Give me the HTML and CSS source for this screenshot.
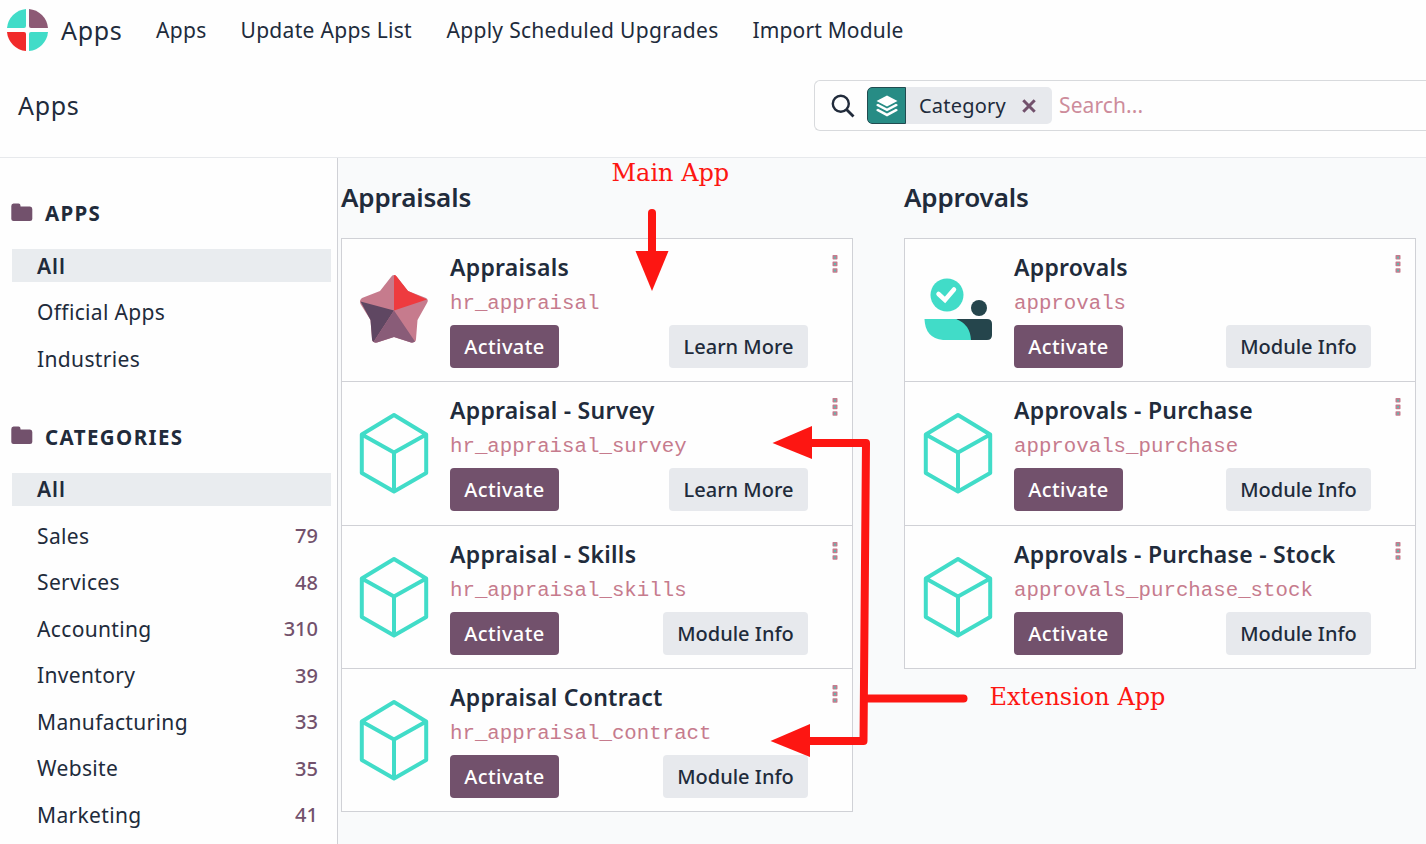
FILE: index.html
```
<!DOCTYPE html>
<html lang="en">
<head>
<meta charset="utf-8">
<title>Apps</title>
<link rel="stylesheet" href="styles.css">
</head>
<body>
<svg width="0" height="0" class="defs">
  <symbol id="cube" viewBox="0 0 70 82"><path d="M35 3 67.2 22.5V61L35 79.5 2.8 61V22.5ZM2.8 22.5 35 40.5 67.2 22.5M35 40.5V79.5" fill="none" stroke="#41dcc8" stroke-width="4" stroke-linejoin="round"/></symbol>
  <symbol id="folder" viewBox="0 0 22 19"><path d="M2.5 0.5H7.5Q9.5 .5 9.5 2.8V3.5H19Q21.3 3.5 21.3 6V16Q21.3 18 19 18H2.5Q.3 18 .3 16V3Q.3 .5 2.5 .5Z" fill="#72516c"/></symbol>
  <symbol id="dots" viewBox="0 0 6 18"><g fill="#c67b8d"><rect x=".5" width="5" height="4.6" rx=".8"/><rect x=".5" y="6.6" width="5" height="4.6" rx=".8"/><rect x=".5" y="13.2" width="5" height="4.6" rx=".8"/></g><g fill="#64b5ad"><rect x="2" y="1.5" width="2" height="2"/><rect x="2" y="8" width="2" height="2"/><rect x="2" y="14.5" width="2" height="2"/></g></symbol>
</svg>
<header class="navbar">
  <svg class="logo" viewBox="0 0 42 42"><path d="M0 19A21 21 0 0 1 19 0V17Q19 19 17 19Z" fill="#41dcc8"/><path d="M22 0A21 21 0 0 1 41 19H24Q22 19 22 17Z" fill="#8d5a75"/><path d="M0 23H17Q19 23 19 25V42A21 21 0 0 1 0 23Z" fill="#f12b2b"/><path d="M41 23A21 21 0 0 1 22 42V25Q22 23 24 23Z" fill="#41dcc8"/></svg>
  <span class="brand">Apps</span>
  <nav class="menu"><a>Apps</a><a class="m2">Update Apps List</a><a class="m3">Apply Scheduled Upgrades</a><a class="m4">Import Module</a></nav>
</header>
<section class="control">
  <span class="crumb">Apps</span>
  <div class="search">
    <svg class="lens" viewBox="0 0 24 24"><circle cx="9.8" cy="9.8" r="8" fill="none" stroke="#212b3b" stroke-width="2.4"/><path d="M15.5 15.5 22.5 22.5" stroke="#212b3b" stroke-width="2.8"/></svg>
    <div class="facet">
      <span class="facet-icon"><svg width="22" height="22" viewBox="0 0 22 22" fill="#fff"><path d="M11 .5 21.5 6 11 11.5.5 6Z"/><path d="M.5 9.5 2 8.7 11 13.4 20 8.7 21.5 9.5V10.7L11 16.2.5 10.7Z"/><path d="M.5 14.5 2 13.700 11 18.400 20 13.700 21.5 14.5V15.7L11 21.5.5 15.7Z"/></svg></span>
      <span class="facet-label">Category</span>
      <svg class="close" viewBox="0 0 13 13"><path d="M1.2 1.2 11.8 11.8M11.8 1.2 1.2 11.8" stroke="#72516c" stroke-width="2.8"/></svg>
    </div>
    <span class="placeholder">Search...</span>
  </div>
</section>
<div class="body">
  <aside class="sidebar">
    <h3><svg><use href="#folder"/></svg>APPS</h3>
    <ul>
      <li class="active"><span>All</span></li>
      <li><span>Official Apps</span></li>
      <li><span>Industries</span></li>
    </ul>
    <h3 class="second"><svg><use href="#folder"/></svg>CATEGORIES</h3>
    <ul>
      <li class="active"><span>All</span></li>
      <li><span>Sales</span><b>79</b></li>
      <li><span>Services</span><b>48</b></li>
      <li><span>Accounting</span><b>310</b></li>
      <li><span>Inventory</span><b>39</b></li>
      <li><span>Manufacturing</span><b>33</b></li>
      <li><span>Website</span><b>35</b></li>
      <li><span>Marketing</span><b>41</b></li>
    </ul>
  </aside>
  <main class="content">
    <section class="group">
      <h2>Appraisals</h2>
      <article class="card">
        <svg class="icon" viewBox="0 0 70 82"><path d="M35 6Q37 6 38 8L49 22 67 29Q70 31 68 34L58.500 51 57 70Q57 74 52 73.500L35 68 18 73.500Q13 74 13 70L11.500 51 1.500 35Q0 31 3 29L21 22 32 8Q33 6 35 6Z" fill="#c67b8d"/><path d="M35 6Q37 6 38 8L49 22 68 30.500 35 41.500Z" fill="#ee3b3f"/><path d="M35 41.500 1.500 32.500 11.500 51 13 70Q13 72 14.500 73Z" fill="#5f4762"/><path d="M35 41.500 14.500 73Q16 74 18 73.500L35 68 52 73.500Q54 74 56 72.500Z" fill="#895c78"/></svg>
        <div class="info"><h4>Appraisals</h4><code>hr_appraisal</code><div class="actions"><button class="primary">Activate</button><button>Learn More</button></div></div>
        <svg class="kebab"><use href="#dots"/></svg>
      </article>
      <article class="card">
        <svg class="icon"><use href="#cube"/></svg>
        <div class="info"><h4>Appraisal - Survey</h4><code>hr_appraisal_survey</code><div class="actions"><button class="primary">Activate</button><button>Learn More</button></div></div>
        <svg class="kebab"><use href="#dots"/></svg>
      </article>
      <article class="card">
        <svg class="icon"><use href="#cube"/></svg>
        <div class="info"><h4>Appraisal - Skills</h4><code>hr_appraisal_skills</code><div class="actions"><button class="primary">Activate</button><button class="wide">Module Info</button></div></div>
        <svg class="kebab"><use href="#dots"/></svg>
      </article>
      <article class="card">
        <svg class="icon"><use href="#cube"/></svg>
        <div class="info"><h4>Appraisal Contract</h4><code>hr_appraisal_contract</code><div class="actions"><button class="primary">Activate</button><button class="wide">Module Info</button></div></div>
        <svg class="kebab"><use href="#dots"/></svg>
      </article>
    </section>
    <section class="group second">
      <h2>Approvals</h2>
      <article class="card">
        <svg class="icon" viewBox="0 0 70 82"><circle cx="24" cy="26" r="16.500" fill="#41dcc8"/><path d="M15.500 25 22 31 31 20.500" fill="none" stroke="#fff" stroke-width="4.500" stroke-linecap="round"/><circle cx="56" cy="39" r="8" fill="#25454c"/><path d="M33 50H64Q69 50 69 55V66Q69 71 64 71H46Z" fill="#25454c"/><path d="M1.500 50H33Q47 55 48 71H20Q2 69 1.500 50Z" fill="#41dcc8"/></svg>
        <div class="info"><h4>Approvals</h4><code>approvals</code><div class="actions"><button class="primary">Activate</button><button class="wide">Module Info</button></div></div>
        <svg class="kebab"><use href="#dots"/></svg>
      </article>
      <article class="card">
        <svg class="icon"><use href="#cube"/></svg>
        <div class="info"><h4>Approvals - Purchase</h4><code>approvals_purchase</code><div class="actions"><button class="primary">Activate</button><button class="wide">Module Info</button></div></div>
        <svg class="kebab"><use href="#dots"/></svg>
      </article>
      <article class="card">
        <svg class="icon"><use href="#cube"/></svg>
        <div class="info"><h4>Approvals - Purchase - Stock</h4><code>approvals_purchase_stock</code><div class="actions"><button class="primary">Activate</button><button class="wide">Module Info</button></div></div>
        <svg class="kebab"><use href="#dots"/></svg>
      </article>
    </section>
  </main>
</div>
<svg class="notes" width="1426" height="844" viewBox="0 0 1426 844">
  <g fill="none" stroke="#fd1612" stroke-width="8" stroke-linecap="round" stroke-linejoin="round"><path d="M652 213V255"/><path d="M808 443H866L863.500 741H806"/><path d="M866 698.500H963.500"/></g>
  <g fill="#fd1612"><path d="M635.500 251H668.500L652 291Z"/><path d="M812 426V459L772.500 443Z"/><path d="M810 724V757L770.500 741Z"/><text x="611.500" y="181">Main App</text><text x="989.500" y="705">Extension App</text></g>
</svg>
</body>
</html>
```
FILE: styles.css
```
* { box-sizing: border-box; }
body { margin: 0; width: 1426px; height: 844px; overflow: hidden; position: relative; background: #fefefe; color: #212b3b; font-family: "Noto Sans", "Open Sans", sans-serif; font-size: 21px; }
.defs { position: absolute; }
h2, h3, h4, ul { margin: 0; padding: 0; }
.navbar { display: flex; align-items: center; height: 60px; padding-left: 7px; white-space: nowrap; }
.logo { width: 42px; height: 42px; }
.brand { font-size: 25px; letter-spacing: .7px; width: 62px; margin-left: 12px; }
.menu { display: flex; margin-left: 33px; letter-spacing: .3px; }
.menu a { width: 84.5px; }
.menu .m2 { width: 206px; }
.menu .m3 { width: 306px; }
.menu .m4 { width: 160px; letter-spacing: .15px; }
.control { height: 98px; display: flex; justify-content: space-between; border-bottom: 1px solid #e7e9ec; }
.crumb { font-size: 25px; letter-spacing: .7px; line-height: 34px; padding: 28px 0 0 18px; }
.search { margin-top: 20px; width: 612px; height: 51px; border: 1px solid #d8dadd; border-right: 0; border-radius: 6px 0 0 6px; display: flex; align-items: center; padding-left: 16px; }
.lens { width: 24px; height: 24px; margin-right: 12px; }
.facet { width: 185px; height: 37px; background: #e7e9ed; border-radius: 5px; display: flex; align-items: center; overflow: hidden; }
.facet-icon { width: 39px; height: 37px; background: #278c85; display: grid; place-items: center; border: 1px solid #214b50; border-radius: 5px 0 0 5px; }
.facet-label { width: 102px; padding-left: 13px; font-size: 20px; letter-spacing: .2px; }
.close { width: 14px; height: 14px; margin-left: 14px; }
.placeholder { color: #cd8c9b; margin: -2px 0 0 7px; font-size: 21px; letter-spacing: .1px; }
.body { display: flex; height: 686px; }
.sidebar { width: 338px; border-right: 1px solid #d0d1d6; padding: 38px 6px 0 11px; }
.sidebar h3 { height: 34px; display: flex; align-items: center; font-size: 20.500px; font-weight: 700; letter-spacing: 1.300px; }
.sidebar h3 svg { width: 22px; height: 19px; margin-right: 12px; margin-top: -2px; }
.sidebar h3.second { margin-top: 44.500px; letter-spacing: 1.400px; }
.sidebar ul { list-style: none; margin: 19px 0 0 1px; }
.sidebar li { height: 33px; margin-bottom: 13.5px; display: flex; justify-content: space-between; align-items: center; padding: 0 13px 0 25px; letter-spacing: .35px; }
.sidebar li.active { background: #e9ecef; font-weight: 600; letter-spacing: 1px; }
.sidebar b { font-weight: 500; color: #72516c; font-size: 20px; letter-spacing: 0; }
.content { flex: 1; background: #f9fafb; display: flex; gap: 51px; padding: 20px 0 0 3px; }
.group { width: 512px; }
.group h2 { font-size: 26px; font-weight: 600; line-height: 39px; height: 60px; letter-spacing: -.15px; }
.card { height: 144.300px; margin-bottom: -1px; border: 1px solid #d0d1d6; background: #fefefe; display: flex; position: relative; padding-left: 17px; }
.second .card { padding-left: 18px; }
.icon { width: 70px; height: 82px; margin-top: 30px; }
.info { width: 358px; margin-left: 21px; padding-top: 12px; }
.second .info { width: 357px; }
.info h4 { font-size: 23px; font-weight: 600; line-height: 32px; letter-spacing: .27px; white-space: nowrap; }
.info code { display: block; font: 20.750px/34px "Liberation Mono", monospace; color: #c67b8d; padding-top: 4px; }
.actions { display: flex; justify-content: space-between; margin-top: 4px; }
button { width: 139px; height: 43px; border: 0; border-radius: 4px; background: #e7e9ed; color: #212b3b; font: 500 20px "Noto Sans", sans-serif; padding: 0; white-space: nowrap; }
button.wide { width: 145px; }
button.primary { width: 109px; background: #72516c; color: #fff; letter-spacing: .4px; }
.kebab { width: 6px; height: 18px; margin: 16px 0 0 24px; }
.notes { position: absolute; left: 0; top: 0; font: 24px "DejaVu Serif", serif; pointer-events: none; }
```
